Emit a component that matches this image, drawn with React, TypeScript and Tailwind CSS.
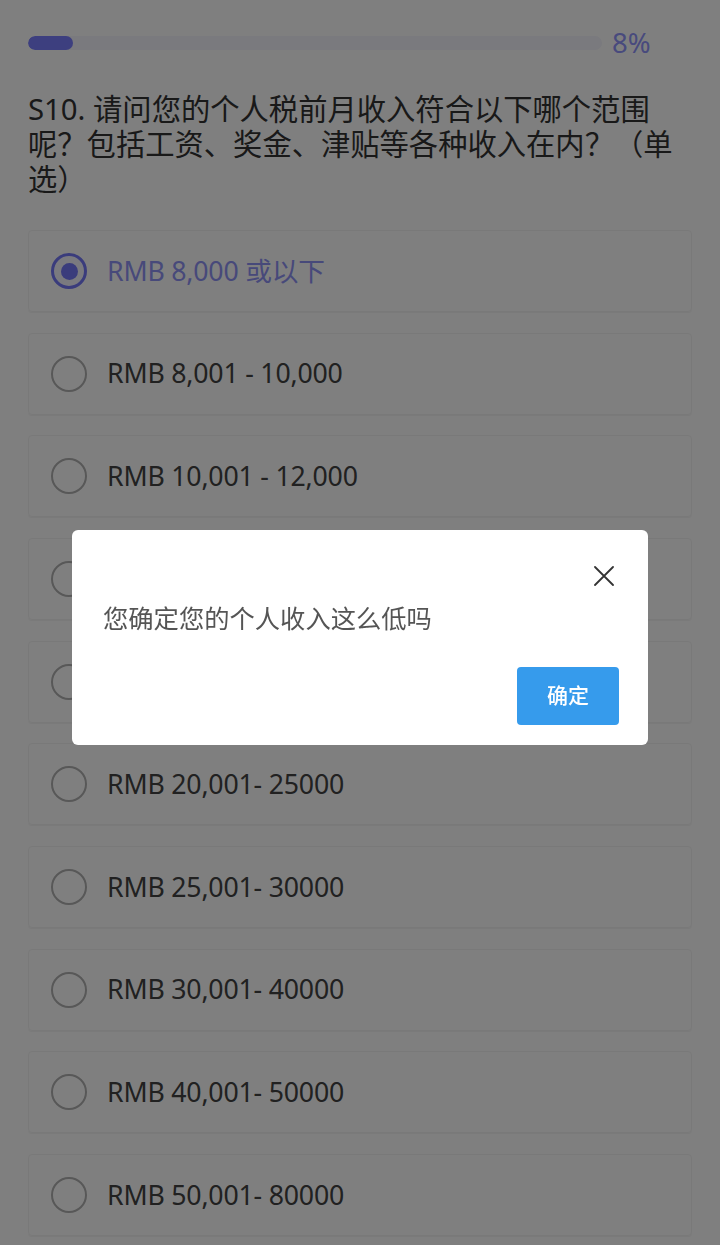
import React from "react";

const options = [
  "RMB 8,000 或以下",
  "RMB 8,001 - 10,000",
  "RMB 10,001 - 12,000",
  "RMB 12,001 - 15,000",
  "RMB 15,001 - 20,000",
  "RMB 20,001- 25000",
  "RMB 25,001- 30000",
  "RMB 30,001- 40000",
  "RMB 40,001- 50000",
  "RMB 50,001- 80000",
];

const font = { fontFamily: '"Noto Sans", "Noto Sans CJK SC", sans-serif' };

export default function App() {
  return (
    <div className="relative min-h-[1245px] bg-white" style={font}>
      <div className="px-[28px] pt-[28px]">
        {/* progress */}
        <div className="flex h-[30px] items-center">
          <div className="h-[14px] w-[574px] overflow-hidden rounded-full bg-[#f4f4fc]">
            <div className="h-full w-[45px] rounded-full bg-[#7a7eff]" />
          </div>
          <span className="ml-[10px] text-[27.5px] leading-none text-[#9094fa]">8%</span>
        </div>

        {/* question */}
        <h1 className="mt-[34px] text-[29.3px] font-normal leading-[35px] text-[#333]">
          S10. 请问您的个人税前月收入符合以下哪个范围呢？包括工资、奖金、津贴等各种收入在内？（单选）
        </h1>

        {/* options */}
        <div className="mt-[33px] flex flex-col gap-[20.67px]">
          {options.map((o, i) => {
            const sel = i === 0;
            return (
              <div
                key={o}
                className="flex h-[82px] items-center rounded-[4px] border border-[#f3f3f3] pl-[22px] shadow-[0_1px_1px_rgba(0,0,0,0.05)]"
              >
                {sel ? (
                  <div className="flex h-[36px] w-[36px] items-center justify-center rounded-full border-[3px] border-[#7478f8] bg-[#f4f4ff]">
                    <div className="h-[17px] w-[17px] rounded-full bg-[#7478f8]" />
                  </div>
                ) : (
                  <div className="h-[36px] w-[36px] rounded-full border-[2.5px] border-[#b0b0b0]" />
                )}
                <span
                  className={`ml-[20px] text-[26.7px] leading-none tracking-[-0.2px] ${
                    sel ? "text-[#8f93f5]" : "text-[#424242]"
                  }`}
                >
                  {o}
                </span>
              </div>
            );
          })}
        </div>
      </div>

      {/* overlay */}
      <div className="fixed inset-0 bg-black/50" />

      {/* dialog */}
      <div className="absolute left-[72px] top-[530px] flex h-[215px] w-[576px] flex-col rounded-[6px] bg-white">
        <div className="flex justify-end pr-[34px] pt-[36px]">
          <svg width="20" height="20" viewBox="0 0 20 20" fill="none">
            <path d="M1 1 L19 19 M19 1 L1 19" stroke="#333" strokeWidth="1.8" strokeLinecap="round" />
          </svg>
        </div>
        <p className="mt-[16px] pl-[31px] text-[25.3px] leading-[32px] text-[#555]">您确定您的个人收入这么低吗</p>
        <div className="mt-auto flex justify-end pb-[20px] pr-[29px]">
          <button className="flex h-[58px] w-[102px] items-center justify-center rounded-[4px] bg-[#369bec] text-[21px] font-medium text-white">
            确定
          </button>
        </div>
      </div>
    </div>
  );
}
